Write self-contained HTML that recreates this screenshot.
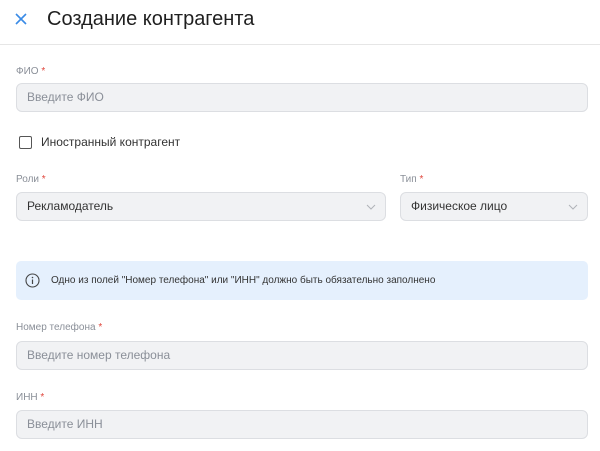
<!DOCTYPE html>
<html><head><meta charset="utf-8"><style>
*{box-sizing:border-box;margin:0;padding:0}
body{width:600px;height:451px;background:#fff;font-family:"Liberation Sans",sans-serif;position:relative;overflow:hidden;color:#222}
.a{position:absolute}
.hdr{left:0;top:0;width:600px;height:45px;border-bottom:1px solid #e6e6e6}
.title{left:47px;top:8px;font-size:20px;color:#1f1f1f}
.lbl{font-size:10px;color:#8a8f98}
.lbl b{color:#e0463c;font-weight:normal}
.inp{background:#f1f2f4;border:1px solid #dcdee2;border-radius:6px;height:29px;font-size:12px;color:#8a8f98;padding-left:10px;line-height:27px}
.sel{color:#333}
.chev{position:absolute;right:9px;top:11px}
</style></head><body>
<div class="a hdr"></div>
<svg class="a" style="left:14px;top:12px" width="14" height="14" viewBox="0 0 14 14"><path d="M2 2L12 12M12 2L2 12" stroke="#3a8be6" stroke-width="1.6"/></svg>
<div class="a title">Создание контрагента</div>

<div class="a lbl" style="left:16px;top:66px">ФИО <b>*</b></div>
<div class="a inp" style="left:16px;top:83px;width:572px">Введите ФИО</div>

<div class="a" style="left:19px;top:136px;width:13px;height:13px;border:1px solid #555;border-radius:2px"></div>
<div class="a" style="left:41px;top:135px;font-size:12px;color:#333">Иностранный контрагент</div>

<div class="a lbl" style="left:16px;top:174px">Роли <b>*</b></div>
<div class="a inp sel" style="left:16px;top:192px;width:370px">Рекламодатель<svg class="chev" width="10" height="6" viewBox="0 0 10 6"><path d="M1 1L5 5L9 1" stroke="#b0b3b8" fill="none"/></svg></div>
<div class="a lbl" style="left:400px;top:174px">Тип <b>*</b></div>
<div class="a inp sel" style="left:400px;top:192px;width:188px">Физическое лицо<svg class="chev" width="10" height="6" viewBox="0 0 10 6"><path d="M1 1L5 5L9 1" stroke="#b0b3b8" fill="none"/></svg></div>

<div class="a" style="left:16px;top:261px;width:572px;height:39px;background:#e5f0fd;border-radius:5px"></div>
<svg class="a" style="left:25px;top:273px" width="15" height="15" viewBox="0 0 15 15"><circle cx="7.5" cy="7.5" r="6.5" stroke="#444" fill="none" stroke-width="1.1"/><path d="M7.5 6.5V11" stroke="#444" stroke-width="1.2"/><circle cx="7.5" cy="4.5" r=".8" fill="#444"/></svg>
<div class="a" style="left:51px;top:275px;font-size:10px;color:#333">Одно из полей "Номер телефона" или "ИНН" должно быть обязательно заполнено</div>

<div class="a lbl" style="left:16px;top:322px">Номер телефона <b>*</b></div>
<div class="a inp" style="left:16px;top:341px;width:572px">Введите номер телефона</div>

<div class="a lbl" style="left:16px;top:392px">ИНН <b>*</b></div>
<div class="a inp" style="left:16px;top:410px;width:572px">Введите ИНН</div>
</body></html>
